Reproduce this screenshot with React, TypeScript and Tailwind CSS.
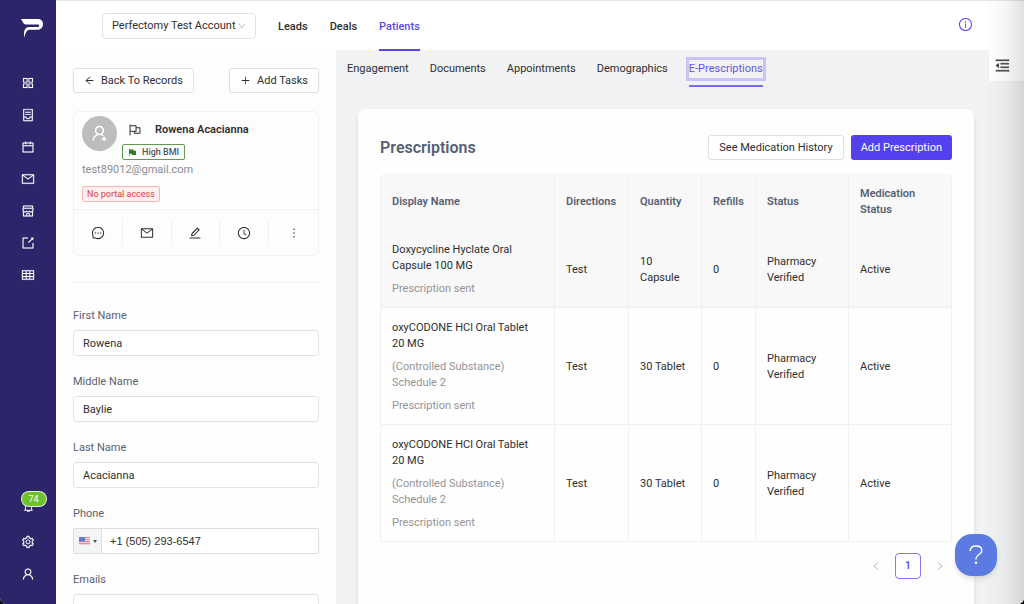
import React, { useState } from 'react';
import clsx from 'clsx';
import {
  AiFillFlag,
  AiOutlineAppstore,
  AiOutlineArrowLeft,
  AiOutlineBell,
  AiOutlineCalendar,
  AiOutlineClockCircle,
  AiOutlineContainer,
  AiOutlineDown,
  AiOutlineEdit,
  AiOutlineExport,
  AiOutlineFlag,
  AiOutlineInfoCircle,
  AiOutlineLeft,
  AiOutlineMail,
  AiOutlineMenuFold,
  AiOutlineMessage,
  AiOutlineMore,
  AiOutlinePlus,
  AiOutlineRight,
  AiOutlineSetting,
  AiOutlineShop,
  AiOutlineTable,
  AiOutlineUser,
  AiOutlineUserAdd,
} from 'react-icons/ai';

type Prescription = {
  id: number;
  name: string;
  schedule?: string;
  note: string;
  directions: string;
  quantity: string;
  refills: number;
  status: string;
  medicationStatus: string;
};

const PRESCRIPTIONS: Prescription[] = [
  {
    id: 1,
    name: 'Doxycycline Hyclate Oral Capsule 100 MG',
    note: 'Prescription sent',
    directions: 'Test',
    quantity: '10 Capsule',
    refills: 0,
    status: 'Pharmacy Verified',
    medicationStatus: 'Active',
  },
  {
    id: 2,
    name: 'oxyCODONE HCl Oral Tablet 20 MG',
    schedule: '(Controlled Substance) Schedule 2',
    note: 'Prescription sent',
    directions: 'Test',
    quantity: '30 Tablet',
    refills: 0,
    status: 'Pharmacy Verified',
    medicationStatus: 'Active',
  },
  {
    id: 3,
    name: 'oxyCODONE HCl Oral Tablet 20 MG',
    schedule: '(Controlled Substance) Schedule 2',
    note: 'Prescription sent',
    directions: 'Test',
    quantity: '30 Tablet',
    refills: 0,
    status: 'Pharmacy Verified',
    medicationStatus: 'Active',
  },
];

const COLUMNS = [
  { title: 'Display Name', width: 'w-[174px]' },
  { title: 'Directions', width: 'w-[74px]' },
  { title: 'Quantity', width: 'w-[73px]' },
  { title: 'Refills', width: 'w-[54px]' },
  { title: 'Status', width: 'w-[93px]' },
  { title: 'Medication Status', width: 'w-[103px]' },
];

const NAV = [
  { label: 'Dashboard', Icon: AiOutlineAppstore },
  { label: 'Forms', Icon: AiOutlineContainer },
  { label: 'Calendar', Icon: AiOutlineCalendar },
  { label: 'Mail', Icon: AiOutlineMail },
  { label: 'Shop', Icon: AiOutlineShop },
  { label: 'Export', Icon: AiOutlineExport },
  { label: 'Tables', Icon: AiOutlineTable },
];

const ACTIONS = [
  { label: 'Message', Icon: AiOutlineMessage },
  { label: 'Email', Icon: AiOutlineMail },
  { label: 'Edit', Icon: AiOutlineEdit },
  { label: 'History', Icon: AiOutlineClockCircle },
  { label: 'More', Icon: AiOutlineMore },
];

const TABS = ['Engagement', 'Documents', 'Appointments', 'Demographics', 'E-Prescriptions'];

const Logo = () => (
  <svg viewBox="0 0 22 20" className="h-5 w-[22px]" fill="white" aria-hidden="true">
    <path d="M0 1h16.500c3.400 0 5.500 2 5.500 4.900 0 3.700-2.400 5.900-6.200 5.900H9.500c-3.800 0-5 2.600-6.200 7.900-.9-6.200.2-10.700 5.200-10.700h7.800c1.200 0 1.900-.5 1.900-1.300s-.7-1.100-1.700-1.100H5.500C2.500 6.600 1.500 3.400 0 1Z" />
  </svg>
);

const Sidebar = () => (
  <aside className="flex w-14 shrink-0 flex-col items-center bg-[#2d2569] pt-[18px] pb-[23px] text-white">
    <a href="#home" aria-label="Home" className="ml-2">
      <Logo />
    </a>
    <nav className="mt-[38px] flex flex-col gap-[18px]">
      {NAV.map(({ label, Icon }) => (
        <a key={label} href={`#${label.toLowerCase()}`} aria-label={label}>
          <Icon size={14} strokeWidth={10} />
        </a>
      ))}
    </nav>
    <div className="mt-auto flex flex-col items-center">
      <button aria-label="Notifications" className="relative mb-[22px]">
        <AiOutlineBell size={13} />
        <span className="absolute -top-[9px] -left-px flex h-4 w-[26px] items-center justify-center rounded-full border border-white/80 bg-[#6fc02f] text-[9px]">
          74
        </span>
      </button>
      <button aria-label="Settings" className="mb-[18px]">
        <AiOutlineSetting size={14} strokeWidth={10} />
      </button>
      <button aria-label="Account">
        <AiOutlineUser size={14} strokeWidth={10} />
      </button>
    </div>
  </aside>
);

const TopBar = () => (
  <header className="flex h-[50px] shrink-0 items-center border-t border-[#e4e4ec] bg-white pr-[51px] pl-[46px]">
    <div className="relative">
      <select
        aria-label="Account"
        className="h-[26px] w-[154px] appearance-none rounded border border-[#e0e0e2] bg-white px-[9px] text-[11px]">
        <option>Perfectomy Test Account</option>
      </select>
      <AiOutlineDown size={10} className="pointer-events-none absolute top-2 right-[9px] text-[#b5b5b8]" />
    </div>
    <nav className="ml-[22px] flex h-full gap-[22px] font-medium">
      <a href="#leads" className="flex items-center pt-0.5">
        Leads
      </a>
      <a href="#deals" className="flex items-center pt-0.5">
        Deals
      </a>
      <a href="#patients" className="relative flex items-center pt-0.5 text-[#5a47e8] after:absolute after:inset-x-0 after:-bottom-px after:h-0.5 after:bg-[#5a47e8]">
        Patients
      </a>
    </nav>
    <button aria-label="Info" className="mb-0.5 ml-auto text-[#5a47e8]">
      <AiOutlineInfoCircle size={15} />
    </button>
  </header>
);

const Field = ({ id, label, value }: { id: string; label: string; value: string }) => (
  <div>
    <label htmlFor={id} className="mb-1.5 block text-[#5a6272]">
      {label}
    </label>
    <input id={id} defaultValue={value} className="block h-[26px] w-full rounded border border-[#e2e2e4] bg-white px-[9px]" />
  </div>
);

const PhoneField = () => (
  <div>
    <label htmlFor="phone" className="mb-1.5 block text-[#5a6272]">
      Phone
    </label>
    <div className="flex h-[26px] rounded-xs border border-[#dedee0] bg-white">
      <button type="button" aria-label="Country" className="flex w-[28px] items-center justify-center gap-[3px] border-r border-[#dedee0] bg-[#f3f4f5]">
        <svg viewBox="0 0 11 8" className="h-2 w-[11px]" aria-hidden="true">
          <rect width="11" height="8" fill="#f3d3d6" />
          <path d="M0 .5h11M0 2.500h11M0 4.500h11M0 6.500h11" stroke="#e88d92" />
          <rect width="6" height="4.500" fill="#5f7bd0" />
        </svg>
        <svg viewBox="0 0 4 3" className="h-[3px] w-1" aria-hidden="true">
          <path d="M0 0h4L2 3z" fill="#555" />
        </svg>
      </button>
      <input id="phone" type="tel" defaultValue="+1 (505) 293-6547" className="min-w-0 flex-1 px-2 font-['Liberation_Sans',sans-serif] text-[11px]" />
    </div>
  </div>
);

const ProfileCard = () => (
  <section className="rounded-md border border-[#f1f1f2]">
    <div className="px-2 pt-1 pb-[7px]">
      <div className="flex">
        <div className="flex size-[35px] shrink-0 items-center justify-center rounded-full bg-[#bdbdbd] text-white">
          <AiOutlineUserAdd size={19} />
        </div>
        <div className="ml-[5px]">
          <div className="ml-[6px] flex h-[27px] items-center gap-[13px]">
            <AiOutlineFlag size={14} />
            <h2 className="font-semibold">Rowena Acacianna</h2>
          </div>
          <span className="mt-px flex h-4 w-fit items-center gap-[5px] rounded-xs border border-[#5f9b52] px-[5px] text-[9px] font-medium text-[#4c5567]">
            <AiFillFlag size={9} className="text-[#2f7d20]" />
            High BMI
          </span>
        </div>
      </div>
      <p className="mt-0.5 text-[#8c8c8e]">test89012@gmail.com</p>
      <span className="mt-2 inline-flex h-4 items-center rounded-xs border border-[#f7b8b5] bg-[#fff0ef] px-1 text-[9px] text-[#d63d43]">No portal access</span>
    </div>
    <div className="grid h-[46px] grid-cols-5 items-center divide-x divide-[#f1f1f2] border-t border-[#f1f1f2]">
      {ACTIONS.map(({ label, Icon }) => (
        <button key={label} aria-label={label} className="flex h-[26px] items-center justify-center">
          <Icon size={14} />
        </button>
      ))}
    </div>
  </section>
);

const PatientPanel = () => (
  <aside className="flex w-[280px] shrink-0 flex-col bg-[#fdfdfe] px-[17px] pt-[18px]">
    <div className="mb-[18px] flex justify-between">
      <button className="flex h-[25px] items-center gap-1.5 rounded-[3px] border border-[#e0e0e2] bg-white px-2.5">
        <AiOutlineArrowLeft size={11} />
        Back To Records
      </button>
      <button className="flex h-[25px] items-center gap-1.5 rounded-[3px] border border-[#e0e0e2] bg-white px-2.5">
        <AiOutlinePlus size={11} />
        Add Tasks
      </button>
    </div>
    <ProfileCard />
    <form className="mt-[26px] flex flex-col gap-[18px] border-t border-[#f1f1f2] pt-[25px]">
      <Field id="first-name" label="First Name" value="Rowena" />
      <Field id="middle-name" label="Middle Name" value="Baylie" />
      <Field id="last-name" label="Last Name" value="Acacianna" />
      <PhoneField />
      <Field id="emails" label="Emails" value="" />
    </form>
  </aside>
);

const PrescriptionTable = () => (
  <table className="w-full table-fixed border-separate border-spacing-0 rounded-t-md border-l border-[#f1f1f2] text-left">
    <thead>
      <tr className="h-[57px] bg-[#f8f8f8] text-[#566074]">
        {COLUMNS.map((c) => (
          <th
            key={c.title}
            scope="col"
            className={clsx('border-r border-[#f1f1f2] px-[11px] font-semibold first:rounded-tl-md last:rounded-tr-md', c.width)}>
            {c.title}
          </th>
        ))}
      </tr>
    </thead>
    <tbody className="[&_td]:border-r [&_td]:border-b [&_td]:border-[#f1f1f2] [&_td]:px-[11px] [&_td]:pt-3 [&_td]:pb-2.5 [&>tr:first-child]:bg-[#f8f8f8]">
      {PRESCRIPTIONS.map((p) => (
        <tr key={p.id}>
          <td>
            <div className="flex flex-col gap-[7px]">
              <p>{p.name}</p>
              {p.schedule ? <p className="text-[#949496]">{p.schedule}</p> : null}
              <p className="text-[#949496]">{p.note}</p>
            </div>
          </td>
          <td>{p.directions}</td>
          <td>{p.quantity}</td>
          <td>{p.refills}</td>
          <td>{p.status}</td>
          <td>{p.medicationStatus}</td>
        </tr>
      ))}
    </tbody>
  </table>
);

const App = () => {
  const [tab, setTab] = useState('E-Prescriptions');

  return (
    <div className="h-screen bg-black">
      <div className="relative flex h-full overflow-hidden rounded-b-md bg-white font-[Roboto,sans-serif] text-[11px] leading-4 text-[#2e2e30]">
        <Sidebar />
        <div className="flex min-w-0 flex-1 flex-col">
          <TopBar />
          <div className="flex min-h-0 flex-1">
            <PatientPanel />
            <main className="min-w-0 flex-1 bg-[#f1f2f4]">
              <div className="flex items-start justify-between">
                <nav className="flex gap-[21px] pt-2.5 pl-[11px]">
                  {TABS.map((t) => (
                    <button
                      key={t}
                      onClick={() => setTab(t)}
                      className={clsx(
                        'relative h-[18px]',
                        tab === t &&
                          'text-[#6453ea] outline-3 outline-offset-0 outline-[#cbc2f8] after:absolute after:inset-x-0 after:-bottom-[9px] after:h-0.5 after:bg-[#7b6cf0]'
                      )}>
                      {t}
                    </button>
                  ))}
                </nav>
                <button aria-label="Collapse panel" className="flex h-[31px] w-[35px] items-center bg-white pl-[5px]">
                  <AiOutlineMenuFold size={17} strokeWidth={20} />
                </button>
              </div>
              <section className="mt-7 mr-[50px] ml-[22px] h-full rounded-lg bg-[#fefefe] p-[22px] pt-[26px] shadow-md">
                <div className="mb-[13px] flex items-center justify-between">
                  <h1 className="text-[16px] font-semibold text-[#566074]">Prescriptions</h1>
                  <div className="flex gap-[7px]">
                    <button className="h-[25px] rounded-[3px] border border-[#e0e0e2] bg-white px-2.5">See Medication History</button>
                    <button className="h-[25px] rounded-[3px] bg-[#5440ef] px-2.5 text-white">Add Prescription</button>
                  </div>
                </div>
                <PrescriptionTable />
                <div className="mt-[11px] mr-[7px] flex items-center justify-end gap-[14px] text-[#b5b5b8]">
                  <button aria-label="Previous page">
                    <AiOutlineLeft size={10} />
                  </button>
                  <button className="size-[26px] rounded border border-[#8677f0] font-medium text-[#5a47e8]">1</button>
                  <button aria-label="Next page">
                    <AiOutlineRight size={10} />
                  </button>
                </div>
              </section>
            </main>
          </div>
        </div>
        <div className="pointer-events-none absolute inset-y-0 right-0 w-10 bg-linear-to-r from-transparent via-black/3 to-black/12" />
        <button aria-label="Help" className="absolute right-[27px] bottom-7 flex size-[42px] items-center justify-center rounded-[17px] bg-[#5b7be3] text-white shadow-md">
          <svg viewBox="0 0 14 20" className="h-5 w-3.5" fill="none" stroke="white" strokeWidth="1.400" aria-hidden="true">
            <path d="M1.200 6C1.200 2.800 3.600 1 7 1s5.800 1.800 5.800 4.700C12.800 9.500 7 9.600 7 13.600v.8" />
            <circle cx="7" cy="17.800" r=".6" fill="white" />
          </svg>
        </button>
      </div>
    </div>
  );
};

export default App;
